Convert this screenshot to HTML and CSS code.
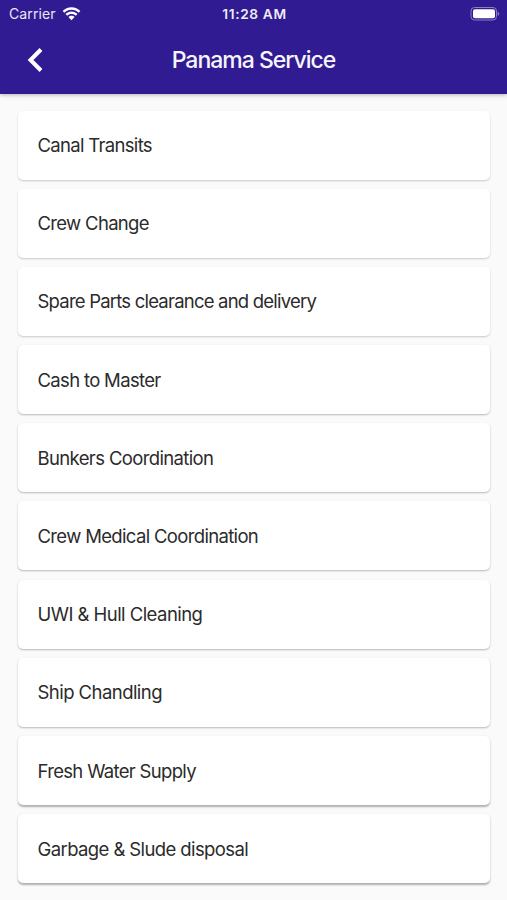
FILE: index.html
```html
<!DOCTYPE html>
<html lang="en">
<head>
<meta charset="utf-8">
<title>Panama Service</title>
<link rel="stylesheet" href="styles.css">
</head>
<body>
<header class="header">
  <div class="status">
    <div class="carrier"><span>Carrier</span>
      <svg class="wifi" width="19" height="14" viewBox="0 0 19 14"><path fill="#fff" d="M9.500 .2C6 .2 2.900 1.600.6 3.900l1.700 1.800C4.200 3.900 6.700 2.800 9.500 2.800s5.300 1.100 7.200 2.900l1.700-1.800C16.100 1.600 13 .2 9.500.2zM9.500 4.500c-2.300 0-4.400.9-6 2.400L5.200 8.700c1.200-1.100 2.600-1.700 4.300-1.700s3.100.6 4.300 1.700l1.700-1.800c-1.600-1.500-3.700-2.400-6-2.400zM9.500 8.700c-1.200 0-2.300.5-3.100 1.300L9.500 13.300l3.100-3.300c-.8-.8-1.900-1.300-3.100-1.300z"/></svg>
    </div>
    <div class="time">11:28 AM</div>
    <svg class="battery" width="30" height="14" viewBox="0 0 30 14"><rect x="1" y=".5" width="25.500" height="12.500" rx="3.500" fill="none" stroke="#8c80c2"/><rect x="3" y="2.300" width="22" height="9" rx="2" fill="#fff"/><path d="M27.700 4.500q3.200 2.250 0 4.500z" fill="#8c80c2"/></svg>
  </div>
  <div class="bar">
    <svg class="back" width="18" height="26" viewBox="0 0 18 26"><path d="M15 2.500 4.500 13 15 23.500" fill="none" stroke="#fff" stroke-width="4"/></svg>
    <h1 class="title">Panama Service</h1>
  </div>
</header>
<main class="list">
  <div class="card soft"><span class="t1">Canal Transits</span></div>
  <div class="card soft"><span class="t2">Crew Change</span></div>
  <div class="card soft"><span class="t3">Spare Parts clearance and delivery</span></div>
  <div class="card"><span class="t4">Cash to Master</span></div>
  <div class="card"><span class="t5">Bunkers Coordination</span></div>
  <div class="card"><span class="t6">Crew Medical Coordination</span></div>
  <div class="card"><span class="t7">UWI &amp; Hull Cleaning</span></div>
  <div class="card"><span class="t8">Ship Chandling</span></div>
  <div class="card deep"><span class="t9">Fresh Water Supply</span></div>
  <div class="card deep"><span class="t10">Garbage &amp; Slude disposal</span></div>
</main>
</body>
</html>
```
FILE: styles.css
```css
* { box-sizing: border-box; }
body { margin: 0; height: 900px; overflow: hidden; background: #fafafa; font-family: Inter, sans-serif; color: #2b2b2b; }
.header { height: 94px; background: #311b92; color: #fff; box-shadow: 0 1px 4px rgba(0,0,0,.28); }
.status { height: 27px; display: grid; grid-template-columns: 1fr auto 1fr; align-items: center; padding: 0 7px 0 9px; font-size: 14px; }
.carrier { display: flex; align-items: center; gap: 6px; letter-spacing: .1px; color: #eae7f5; }
.time { font-weight: 600; font-size: 13.700px; letter-spacing: .65px; color: #eeebf7; }
.battery { justify-self: end; }
.bar { height: 66px; display: grid; grid-template-columns: 80px 1fr 80px; align-items: center; }
.back { margin-left: 26px; }
.title { margin: 0; font-size: 23px; font-weight: 500; text-align: center; letter-spacing: -1px; white-space: nowrap; color: #f7f5fc; }
.list { padding: 16.500px 17px 0 18px; display: flex; flex-direction: column; gap: 9.200px; }
.card { height: 69px; flex: none; padding-left: 19.500px; display: flex; align-items: center; background: #fff; border-radius: 5px; box-shadow: 0 1px 2px rgba(0,0,0,.27); font-size: 18.500px; white-space: nowrap; }
.soft { box-shadow: 0 1px 2px rgba(0,0,0,.2); }
.deep { box-shadow: 0 1.500px 2px rgba(0,0,0,.3); }
.t1 { letter-spacing: -.68px; }
.t2 { letter-spacing: -.68px; }
.t3 { letter-spacing: -.79px; }
.t4 { letter-spacing: -.67px; }
.t5 { letter-spacing: -.63px; }
.t6 { letter-spacing: -.66px; }
.t7 { letter-spacing: -.54px; }
.t8 { letter-spacing: -.55px; }
.t9 { letter-spacing: -.68px; }
.t10 { letter-spacing: -.6px; }
```
